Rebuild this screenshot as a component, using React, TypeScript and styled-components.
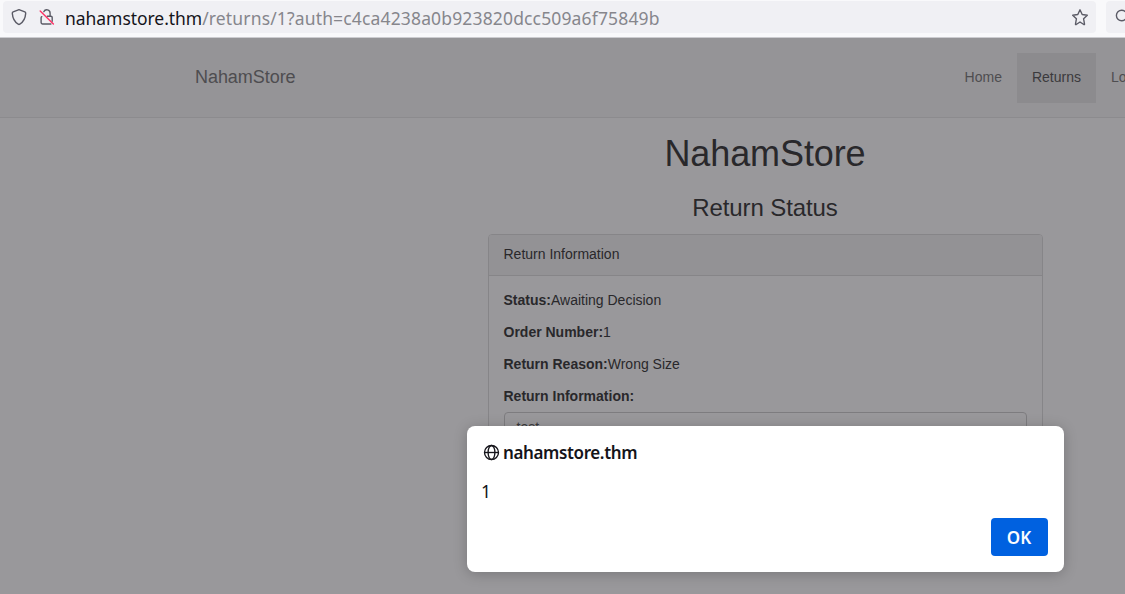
import React from "react";
import styled, { createGlobalStyle } from "styled-components";

const GlobalStyle = createGlobalStyle`
  * { box-sizing: border-box; }
  body { margin: 0; overflow: hidden; background: #fff; }
  h1, h3, p { margin: 0; font-weight: 400; }
`;

const uiFont = `"Noto Sans", sans-serif`;
const pageFont = `"Liberation Sans", Arial, sans-serif`;

const Browser = styled.div`
  width: 1125px;
  height: 594px;
  overflow: hidden;
  display: flex;
  flex-direction: column;
`;

const Toolbar = styled.header`
  flex: none;
  height: 38px;
  display: flex;
  align-items: flex-start;
  gap: 10px;
  padding: 1px 0 0 3px;
  background: #f9f9fb;
  border-bottom: 1px solid #ccccd0;
  font-family: ${uiFont};
`;

const AddressBar = styled.div`
  flex: none;
  width: 1093px;
  height: 32px;
  display: flex;
  align-items: center;
  padding: 0 7px 0 8px;
  border-radius: 4px;
  background: #f0f0f4;
`;

const SearchBar = styled(AddressBar)`
  width: 60px;
`;

const ToolbarIcon = styled.svg<{ $gap?: number }>`
  flex: none;
  display: block;
  width: 18px;
  height: 18px;
  margin-right: ${(p) => p.$gap ?? 0}px;
  fill: none;
  stroke: #5b5b66;
  stroke-width: 1.4;
  stroke-linecap: round;
  stroke-linejoin: round;
`;

const Url = styled.div`
  flex: 1;
  padding-top: 2px;
  font-size: 17.5px;
  line-height: 24px;
  letter-spacing: 0.15px;
  color: #86868c;
  white-space: nowrap;
`;

const Host = styled.span`
  letter-spacing: -0.05px;
  color: #15141a;
`;

const Viewport = styled.div`
  position: relative;
  flex: 1;
  overflow: hidden;
  font-family: ${pageFont};
  font-size: 14px;
  line-height: 20px;
  color: #333;
`;

const Page = styled.div`
  width: 1530px;
`;

const Navbar = styled.nav`
  height: 80px;
  padding-top: 15px;
  background: #f8f8f8;
  border-bottom: 1px solid #e7e7e7;
`;

const NavContainer = styled.div`
  width: 1170px;
  margin: 0 auto;
  padding-left: 15px;
  display: flex;
`;

const Brand = styled.span`
  width: 754.6px;
  padding: 14px 0;
  font-size: 18px;
  letter-spacing: -0.05px;
  color: #777;
`;

const NavItem = styled.span<{ $active?: boolean }>`
  height: 50px;
  padding: 14px 15px 16px;
  color: ${(p) => (p.$active ? "#555" : "#777")};
  background: ${(p) => (p.$active ? "#e7e7e7" : "transparent")};
`;

const Content = styled.main`
  width: 555px;
  margin: 0 auto;
`;

const Title = styled.h1`
  padding-top: 16px;
  font-size: 36px;
  line-height: 40px;
  letter-spacing: -0.1px;
  text-align: center;
`;

const Subtitle = styled.h3`
  padding: 20px 0 13px;
  font-size: 24px;
  line-height: 27px;
  letter-spacing: -0.1px;
  text-align: center;
`;

const Panel = styled.section`
  height: 300px;
  border: 1px solid #ddd;
  border-radius: 4px;
`;

const PanelHeading = styled.div`
  height: 41px;
  padding: 9px 15px;
  background: #f5f5f5;
  border-bottom: 1px solid #ddd;
  border-radius: 3px 3px 0 0;
`;

const PanelBody = styled.div`
  padding: 14px 15px;
  display: flex;
  flex-direction: column;
  gap: 12px;
`;

const Input = styled.div`
  height: 74px;
  margin-top: -6px;
  padding: 4px 12px;
  border: 1px solid #ccc;
  border-radius: 4px;
  color: #555;
`;

const Dimmer = styled.div`
  position: absolute;
  inset: 0;
  background: rgba(28, 27, 34, 0.45);
`;

const Dialog = styled.div`
  position: absolute;
  left: 467px;
  top: 388px;
  width: 597px;
  height: 146px;
  padding: 15px 16px 16px;
  display: flex;
  flex-direction: column;
  border-radius: 8px;
  background: #fff;
  box-shadow: 0 2px 14px rgba(0, 0, 0, 0.22);
  font-family: ${uiFont};
  font-size: 17px;
  line-height: 24px;
  color: #15141a;
`;

const DialogTitle = styled.div`
  display: flex;
  align-items: center;
  gap: 3px;
  font-weight: 600;
  letter-spacing: -0.38px;
`;

const Globe = styled.svg`
  width: 17px;
  height: 17px;
  margin-top: -2px;
  fill: none;
  stroke: #15141a;
  stroke-width: 1.35;
`;

const Message = styled.p`
  margin: 14px 0 0 -2px;
  font-size: 17.5px;
`;

const OkButton = styled.button`
  align-self: flex-end;
  width: 57px;
  height: 38px;
  margin-top: auto;
  padding: 0 1px 0 0;
  border: 0;
  border-radius: 4px;
  background: #0061e0;
  color: #fbfbfe;
  font: 600 17px ${uiFont};
`;

const details = [
  ["Status:", "Awaiting Decision"],
  ["Order Number:", "1"],
  ["Return Reason:", "Wrong Size"],
  ["Return Information:", ""],
];

export default function App() {
  return (
    <>
      <GlobalStyle />
      <Browser>
        <Toolbar>
          <AddressBar>
            <ToolbarIcon $gap={9} viewBox="0 0 18 18">
              <path d="M8 1.6 2.2 3.9Q1.2 4.3 1.3 5.4C1.7 10.9 3.4 13.9 7.2 16.2Q8 16.7 8.8 16.2C12.6 13.9 14.3 10.9 14.7 5.4Q14.8 4.3 13.8 3.9Z" />
            </ToolbarIcon>
            <ToolbarIcon $gap={9} viewBox="0 0 18 18">
              <path d="M5.8 3.7a3.3 3.3 0 0 1 6.3 1.5v3M9.3 8.3h3.6q1.3 0 1.3 1.3v3.6M3.8 8.7q-.7.4-.7 1.1v4.8q0 1.4 1.4 1.4h8.4" />
              <path d="m2.2 3 13.2 13" stroke="#ff3366" strokeWidth="1.4" />
            </ToolbarIcon>
            <Url>
              <Host>nahamstore.thm</Host>/returns/1?auth=c4ca4238a0b923820dcc509a6f75849b
            </Url>
            <ToolbarIcon viewBox="0 0 18 18">
              <path d="m9 1.8 2.2 4.7 5.1.7-3.7 3.6.9 5.2q.1.9-.7.5L9 14l-3.8 2.5q-.8.4-.7-.5l.9-5.2-3.7-3.6 5.1-.7Z" />
            </ToolbarIcon>
          </AddressBar>
          <SearchBar>
            <ToolbarIcon viewBox="0 0 18 18">
              <circle cx="7.7" cy="7.5" r="5.3" />
              <path d="m12 11.5 4 4" />
            </ToolbarIcon>
          </SearchBar>
        </Toolbar>
        <Viewport>
          <Page>
            <Navbar>
              <NavContainer>
                <Brand>NahamStore</Brand>
                <NavItem>Home</NavItem>
                <NavItem $active>Returns</NavItem>
                <NavItem>Login</NavItem>
              </NavContainer>
            </Navbar>
            <Content>
              <Title>NahamStore</Title>
              <Subtitle>Return Status</Subtitle>
              <Panel>
                <PanelHeading>Return Information</PanelHeading>
                <PanelBody>
                  {details.map(([label, value]) => (
                    <p key={label}>
                      <b>{label}</b>
                      {value}
                    </p>
                  ))}
                  <Input>test</Input>
                </PanelBody>
              </Panel>
            </Content>
          </Page>
          <Dimmer />
          <Dialog>
            <DialogTitle>
              <Globe viewBox="0 0 17 17">
                <circle cx="8.5" cy="8.5" r="7" />
                <ellipse cx="8.5" cy="8.5" rx="3.4" ry="7" />
                <path d="M1.5 8.5h14" />
              </Globe>
              nahamstore.thm
            </DialogTitle>
            <Message>1</Message>
            <OkButton>OK</OkButton>
          </Dialog>
        </Viewport>
      </Browser>
    </>
  );
}
